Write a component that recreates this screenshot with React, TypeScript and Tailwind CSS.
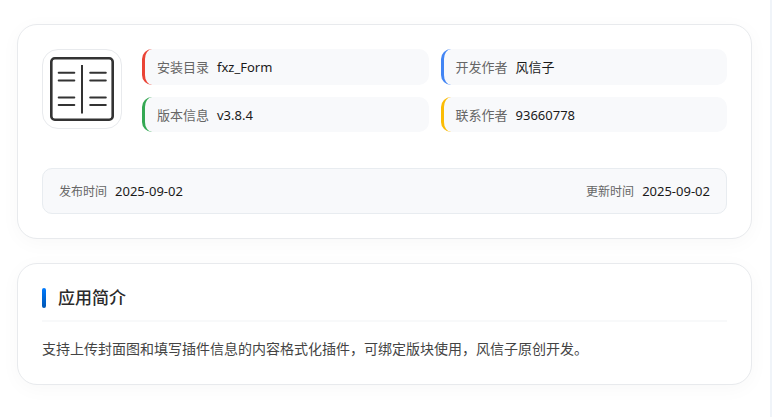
import type { ReactNode } from 'react';

const infoItems = [
  { label: '安装目录', value: 'fxz_Form', accent: 'border-[#ea4335]', height: 'h-9' },
  { label: '开发作者', value: '风信子', accent: 'border-[#4285f4]', height: 'h-9' },
  { label: '版本信息', value: 'v3.8.4', accent: 'border-[#34a853]', height: 'h-[35px]' },
  { label: '联系作者', value: '93660778', accent: 'border-[#fbbc05]', height: 'h-[35px]' },
];

const dates = [
  { label: '发布时间', value: '2025-09-02' },
  { label: '更新时间', value: '2025-09-02' },
];

function Card({ children }: { children: ReactNode }) {
  return (
    <section className="rounded-[20px] border border-[#e8eaed] bg-white p-6 shadow-[0_4px_20px_rgba(0,0,0,0.03)]">
      {children}
    </section>
  );
}

function FormIcon() {
  return (
    <svg viewBox="0 0 64 64" className="size-16" fill="none" stroke="#333333" strokeWidth="2" strokeLinecap="round" aria-hidden="true">
      <rect x="1.3" y="1.3" width="61.4" height="61.4" rx="3.5" strokeWidth="2.6" />
      <path d="M32 8V56.5" strokeLinecap="butt" />
      <path d="M8.7 15.8h15.6M8.7 23.4h15.6M8.7 40.4h15.6M8.7 48h15.6" />
      <path d="M40.2 15.8h15.6M40.2 23.4h15.6M40.2 40.4h15.6M40.2 48h15.6" />
    </svg>
  );
}

export default function App() {
  return (
    <main className="min-h-screen border-r-2 border-[#f0f4f9] bg-white pt-6 pr-[18px] pb-8 pl-[17px] font-['Noto_Sans','Noto_Sans_CJK_SC',sans-serif]">
      <div className="flex flex-col gap-6">
        <Card>
          <div className="flex items-start gap-5">
            <div className="flex size-20 shrink-0 items-center justify-center rounded-2xl border border-[#e8eaed] bg-white">
              <FormIcon />
            </div>
            <dl className="grid flex-1 grid-cols-2 gap-3">
              {infoItems.map((item) => (
                <div
                  key={item.label}
                  className={`flex items-center gap-2 rounded-[10px] border-l-3 bg-[#f8f9fb] px-3 text-[13px] leading-5 ${item.accent} ${item.height}`}
                >
                  <dt className="text-[#666666]">{item.label}</dt>
                  <dd className="text-[#1a1a1a]">{item.value}</dd>
                </div>
              ))}
            </dl>
          </div>
          <dl className="mt-9 flex items-center justify-between rounded-[10px] border border-[#e8ecf0] bg-[#f8f9fb] px-4 py-3">
            {dates.map((date) => (
              <div key={date.label} className="flex h-5 items-baseline gap-2">
                <dt className="text-xs leading-5 text-[#666666]">{date.label}</dt>
                <dd className="text-[13px] leading-5 text-[#1a1a1a]">{date.value}</dd>
              </div>
            ))}
          </dl>
        </Card>
        <Card>
          <h2 className="flex items-center gap-3 border-b-2 border-[#f8f9fa] pb-3 text-[17px] leading-5 font-medium text-[#2b2b2b]">
            <span className="h-5 w-1 rounded-xs bg-linear-to-b from-[#007bff] to-[#0056b3]" />
            应用简介
          </h2>
          <p className="mt-4 text-sm leading-[22px] text-[#444444]">
            支持上传封面图和填写插件信息的内容格式化插件，可绑定版块使用，风信子原创开发。
          </p>
        </Card>
      </div>
    </main>
  );
}
